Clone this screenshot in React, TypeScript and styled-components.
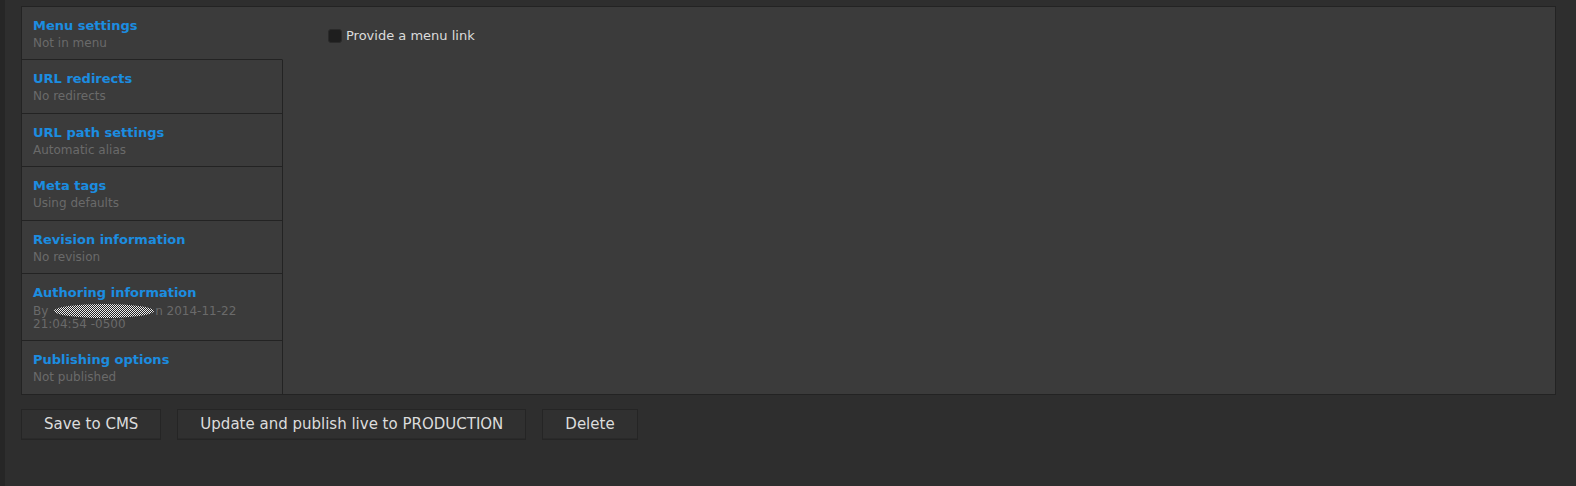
import React from "react";
import styled, { createGlobalStyle } from "styled-components";

const Global = createGlobalStyle`
  html, body { margin: 0; padding: 0; background: #2e2e2e; }
  body { font-family: "DejaVu Sans", "Liberation Sans", sans-serif; }
  * { box-sizing: border-box; }
`;

const Page = styled.div`
  display: flex;
  min-height: 486px;
  background: #2e2e2e;
`;

const EdgeStrip = styled.div`
  width: 5px;
  flex: none;
  background: #262626;
`;

const Main = styled.div`
  flex: 1;
  padding: 6px 20px 0 16px;
`;

const Panel = styled.div`
  display: flex;
  border: 1px solid #232323;
  background: #3b3b3b;
`;

const TabList = styled.ul`
  list-style: none;
  margin: 0;
  padding: 0;
  width: 261px;
  flex: none;
`;

const Tab = styled.li<{ $selected?: boolean; $last?: boolean }>`
  padding: 10px 12px 10.4px 11px;
  border-right: 1px solid ${(p) => (p.$selected ? "transparent" : "#232323")};
  border-bottom: ${(p) => (p.$last ? "none" : "1px solid #232323")};
  background: #3b3b3b;
`;

const TabTitle = styled.a`
  display: block;
  font-size: 13px;
  line-height: 17px;
  font-weight: bold;
  color: #1b8de0;
  text-decoration: none;
`;

const TabSummary = styled.div`
  margin-top: 3px;
  font-size: 12px;
  line-height: 12px;
  color: #6a6a6a;
`;

const Redacted = styled.span`
  display: inline-block;
  width: 100px;
  height: 14px;
  vertical-align: -3px;
  margin-left: 2px;
  margin-right: 1px;
  border-radius: 50%;
  background-color: #fff;
  background-image: repeating-conic-gradient(#222 0% 25%, #eee 0% 50%);
  background-size: 2px 2px;
`;

const Pane = styled.div`
  flex: 1;
  padding: 21px 0 0 45px;
`;

const CheckRow = styled.label`
  display: flex;
  align-items: center;
  gap: 4px;
  font-size: 13px;
  color: #dcdcdc;
`;

const CheckBox = styled.span`
  width: 14px;
  height: 14px;
  border-radius: 3px;
  background: #1e1e1e;
  border: 1px solid #2a2a2a;
`;

const Actions = styled.div`
  display: flex;
  gap: 16px;
  margin-top: 14px;
`;

const Button = styled.button`
  height: 31px;
  padding: 0 22px;
  font-family: "DejaVu Sans", "Liberation Sans", sans-serif;
  font-size: 15px;
  color: #dcdcdc;
  background: #303030;
  border: 1px solid #252525;
  box-shadow: inset 0 -1px 0 #2a2a2a;
  border-radius: 0;
`;

const tabs = [
  { title: "Menu settings", summary: "Not in menu", selected: true },
  { title: "URL redirects", summary: "No redirects" },
  { title: "URL path settings", summary: "Automatic alias" },
  { title: "Meta tags", summary: "Using defaults" },
  { title: "Revision information", summary: "No revision" },
  { title: "Authoring information", summary: "author" },
  { title: "Publishing options", summary: "Not published" },
];

export default function App() {
  return (
    <>
      <Global />
      <Page>
        <EdgeStrip />
        <Main>
          <Panel>
            <TabList>
              {tabs.map((t, i) => (
                <Tab key={t.title} $selected={t.selected} $last={i === tabs.length - 1}>
                  <TabTitle href="#">{t.title}</TabTitle>
                  <TabSummary>
                    {t.summary === "author" ? (
                      <>
                        By <Redacted />n 2014-11-22 21:04:54 -0500
                      </>
                    ) : (
                      t.summary
                    )}
                  </TabSummary>
                </Tab>
              ))}
            </TabList>
            <Pane>
              <CheckRow>
                <CheckBox />
                Provide a menu link
              </CheckRow>
            </Pane>
          </Panel>
          <Actions>
            <Button>Save to CMS</Button>
            <Button>Update and publish live to PRODUCTION</Button>
            <Button>Delete</Button>
          </Actions>
        </Main>
      </Page>
    </>
  );
}
